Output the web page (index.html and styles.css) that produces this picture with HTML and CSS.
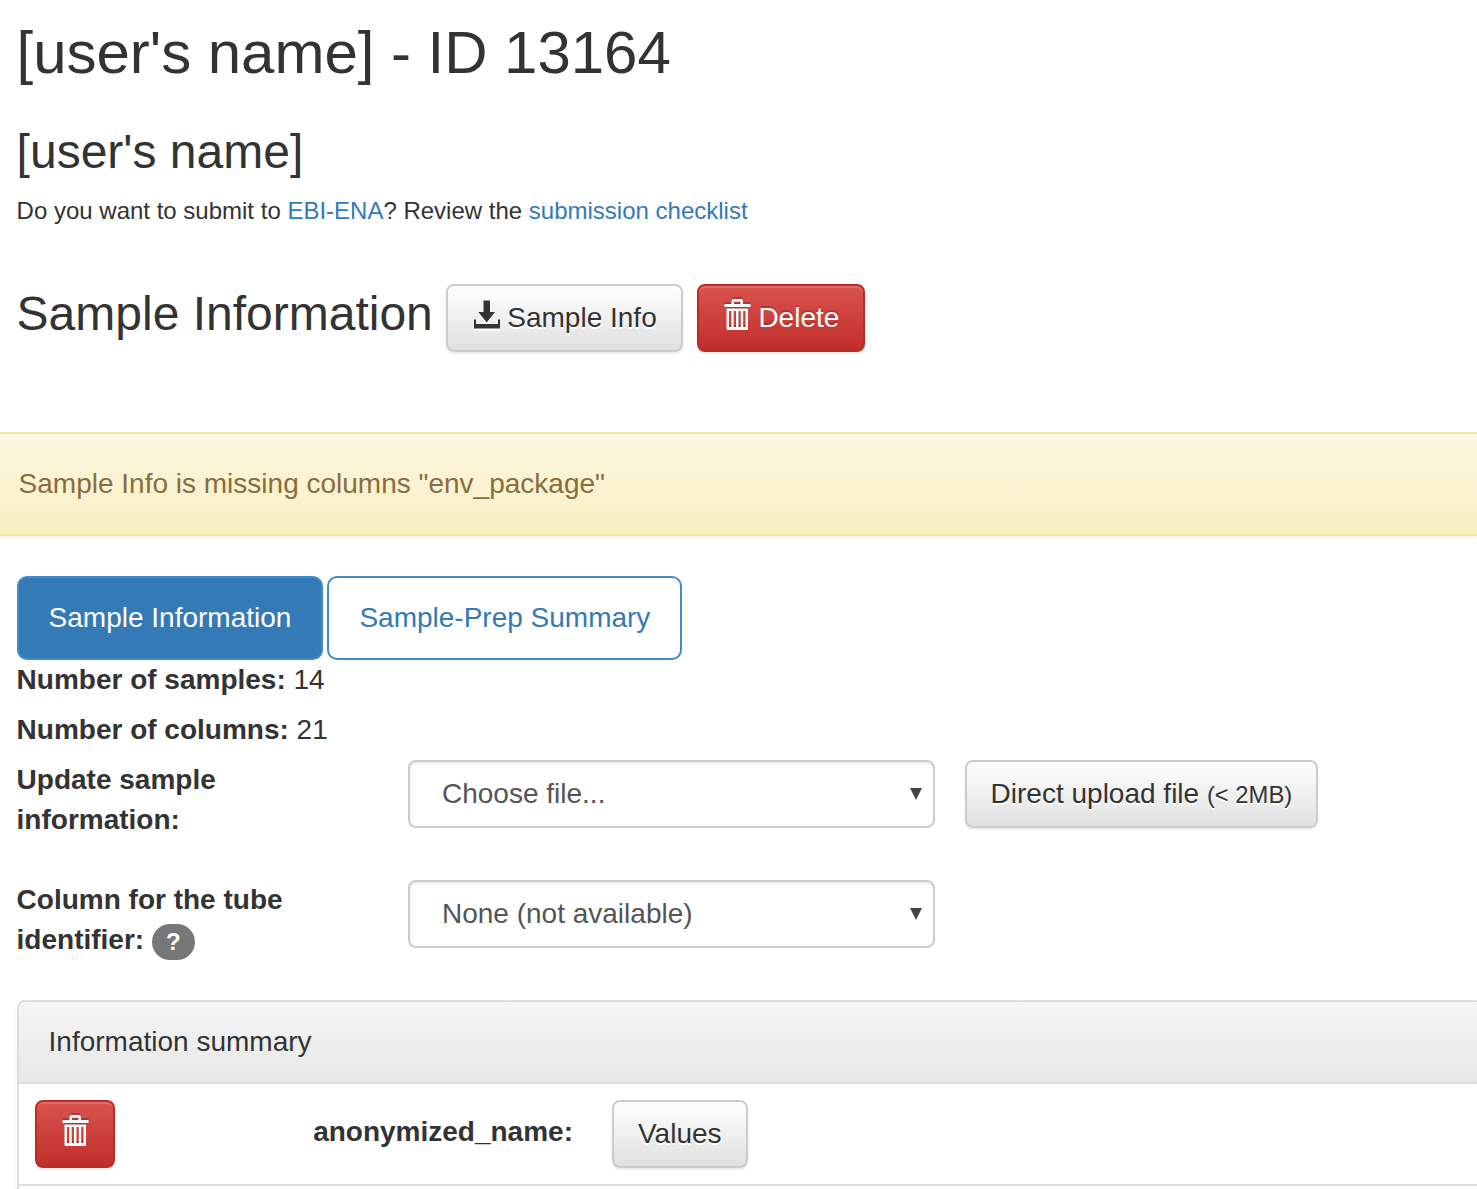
FILE: index.html
```html
<!DOCTYPE html>
<html lang="en">
<head>
<meta charset="utf-8">
<title>Study 13164</title>
<link rel="stylesheet" href="styles.css">
</head>
<body>
<svg class="sprite" aria-hidden="true">
  <symbol id="trash" viewBox="-0.5 0 28 32">
    <path fill-rule="evenodd" d="M1 5h7V2q0-2 2-2h7.500q2 0 2 2v3h7.500v3H1zM10.500 5h6.500V2.700h-6.500zM3 9.500h21.500V29.500q0 1.500-1.500 1.500H4.500Q3 31 3 29.500zM5.500 12v16h2.300V12zM10.200 12v16h2.300V12zM15 12v16h2.300V12zM19.700 12v16h2.300V12z"/>
  </symbol>
  <symbol id="save" viewBox="-1 0 28 32">
    <path d="M10.500 1.500h6.500V13H22L13.700 23.500 5.300 13h5.200zM1 20.500h2v4.500h22v-4.500h2v9H1z"/>
  </symbol>
</svg>
<header class="intro">
  <h1 class="title">[user's name] - ID 13164</h1>
  <h2 class="subtitle">[user's name]</h2>
  <p class="hint">Do you want to submit to <a href="#">EBI-ENA</a>? Review the <a href="#">submission checklist</a></p>
</header>
<div class="section-head">
  <h2 class="section-title">Sample Information</h2>
  <button class="btn btn-default"><svg class="icon"><use href="#save"/></svg>Sample Info</button>
  <button class="btn btn-danger"><svg class="icon"><use href="#trash"/></svg>Delete</button>
</div>
<div class="alert">Sample Info is missing columns "env_package"</div>
<main class="content">
  <nav class="tabs">
    <a class="tab tab-active" href="#">Sample Information</a>
    <a class="tab" href="#">Sample-Prep Summary</a>
  </nav>
  <div class="stat"><b>Number of samples:</b> 14</div>
  <div class="stat"><b>Number of columns:</b> 21</div>
  <div class="field">
    <label class="label">Update sample information:</label>
    <div class="select"><span>Choose file...</span><i class="arrow"></i></div>
    <button class="btn btn-default">Direct upload file&nbsp;<small class="limit">(&lt; 2MB)</small></button>
  </div>
  <div class="field">
    <label class="label">Column for the tube identifier: <span class="badge">?</span></label>
    <div class="select"><span>None (not available)</span><i class="arrow"></i></div>
  </div>
  <section class="panel">
    <div class="panel-heading">Information summary</div>
    <div class="row">
      <button class="btn btn-danger"><svg class="icon icon-only"><use href="#trash"/></svg></button>
      <b class="row-name">anonymized_name:</b>
      <button class="btn btn-default">Values</button>
    </div>
    <div class="row row-last"></div>
  </section>
</main>
</body>
</html>
```

FILE: styles.css
```css
* { box-sizing: border-box; }
html { overflow: hidden; }
body {
  margin: 0;
  height: 1189px;
  overflow: hidden;
  background: #fff;
  color: #333;
  font: 28px/40px "Liberation Sans", Arial, sans-serif;
}
a { color: #337ab7; text-decoration: none; }
h1, h2, p { margin: 0; font-weight: 400; }
.sprite { display: none; }
.intro { padding: 20px 16.6px 0; }
.title { font-size: 60px; line-height: 66px; letter-spacing: -.04px; }
.subtitle { margin-top: 39px; font-size: 48px; line-height: 53px; }
.hint { margin-top: 16px; font-size: 24px; line-height: 34px; }
.section-head {
  display: flex;
  align-items: flex-start;
  height: 148px;
  margin-top: 56px;
  padding-left: 16.6px;
}
.section-title { width: 429px; padding-top: 3px; font-size: 48px; line-height: 53px; white-space: nowrap; }
.section-head .btn + .btn { margin-left: 14px; }
.btn {
  display: flex;
  flex: none;
  align-items: center;
  height: 68px;
  padding: 0 24px;
  border: 2px solid #ccc;
  border-radius: 8px;
  font: inherit;
  white-space: nowrap;
}
.btn-default {
  color: #333;
  background: linear-gradient(#fff, #e0e0e0);
  box-shadow: inset 0 2px 0 rgba(255,255,255,.15), 0 2px 2px rgba(0,0,0,.075);
  text-shadow: 0 2px 0 #fff;
}
.btn-danger {
  color: #fff;
  border-color: #b92c28;
  background: linear-gradient(#d9534f, #c12e2a);
  box-shadow: inset 0 2px 0 rgba(255,255,255,.15), 0 2px 2px rgba(0,0,0,.075);
  text-shadow: 0 -2px 0 rgba(0,0,0,.2);
}
.icon {
  width: 28px;
  height: 32px;
  margin: -7px 7.7px 0 0;
  fill: currentColor;
}
.btn-default .icon { filter: drop-shadow(0 2px 0 #fff); }
.btn-danger .icon { filter: drop-shadow(0 -2px 0 rgba(0,0,0,.2)); }
.btn .icon-only { margin-right: 0; }
.alert {
  height: 104px;
  padding: 30px 18.6px;
  border: solid #f5e79e;
  border-width: 2px 0;
  color: #8a6d3b;
  background: linear-gradient(#fcf8e3, #f8efc0);
  box-shadow: inset 0 2px 0 rgba(255,255,255,.25), 0 2px 4px rgba(0,0,0,.05);
  text-shadow: 0 2px 0 rgba(255,255,255,.2);
}
.content { padding: 40px 0 0 16.6px; }
.tabs { display: flex; gap: 4px; }
.tab {
  padding: 20px 30px;
  border: 2px solid #428bca;
  border-radius: 10px;
}
.tab-active { color: #fff; background: #337ab7; }
.stat { height: 50px; }
.field { display: flex; height: 120px; }
.label { width: 391px; padding-right: 100px; font-weight: 700; }
.badge {
  display: inline-block;
  height: 36px;
  padding: 6px 14px;
  border-radius: 20px;
  color: #fff;
  background: #777;
  font-size: 24px;
  line-height: 24px;
  vertical-align: middle;
}
.select {
  display: flex;
  align-items: center;
  justify-content: space-between;
  width: 527px;
  height: 68px;
  margin-right: 30px;
  padding: 0 11px 0 32.4px;
  border: 2px solid #ccc;
  border-radius: 8px;
  color: #555;
  box-shadow: inset 0 2px 2px rgba(0,0,0,.075);
}
.arrow {
  border: solid transparent;
  border-width: 12px 6px 0;
  border-top-color: #444;
}
.limit { padding-top: 2px; font-size: 23.8px; }
.panel {
  width: 1500px;
  border: 2px solid #ddd;
  border-bottom: 0;
  border-radius: 8px 8px 0 0;
  box-shadow: 0 2px 4px rgba(0,0,0,.05);
}
.panel-heading {
  padding: 20px 30px;
  border-radius: 6px 6px 0 0;
  background: linear-gradient(#f5f5f5, #e8e8e8);
}
.row {
  display: flex;
  height: 102px;
  padding: 16px;
  border-top: 2px solid #ddd;
}
.row-last { height: 5px; padding: 0; }
.row-name { width: 458.4px; margin: 12px 39px 0 0; text-align: right; }
```
